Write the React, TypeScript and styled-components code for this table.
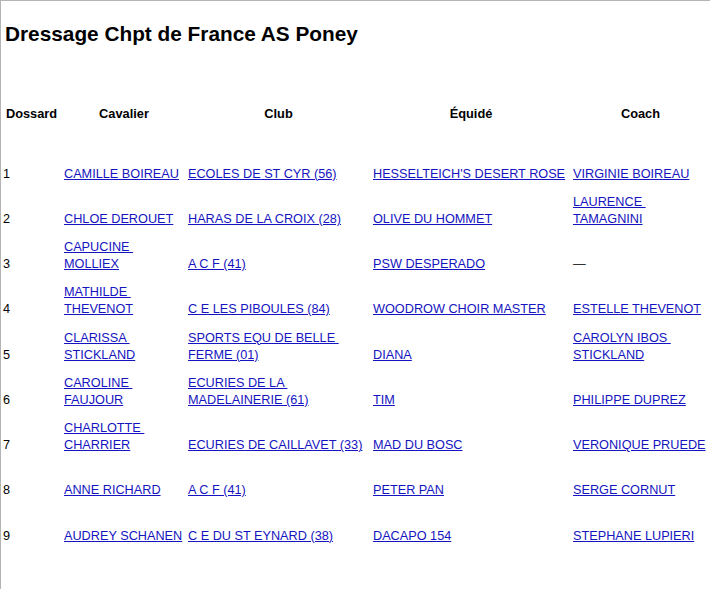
import React from 'react'
import styled, { createGlobalStyle } from 'styled-components'

const GlobalStyle = createGlobalStyle`
  html, body {
    margin: 0;
    padding: 0;
    background: #ffffff;
  }
  body {
    font-family: 'Liberation Sans', Arial, sans-serif;
    color: #000000;
  }
`

const Page = styled.div`
  box-sizing: border-box;
  min-height: 100vh;
  border-top: 1px solid #b4b4b4;
  border-left: 1px solid #b4b4b4;
`

const Title = styled.h1`
  margin: 0;
  padding: 21px 0 0 4px;
  font-size: 20.8px;
  line-height: 24px;
  font-weight: bold;
`

const Results = styled.table`
  margin-top: 46px;
  width: 709px;
  table-layout: fixed;
  border-collapse: collapse;
  border-spacing: 0;
`

const HeadRow = styled.tr`
  height: 45.25px;
`

const HeadCell = styled.th`
  padding: 0 2px 2px;
  font-size: 12.8px;
  font-weight: bold;
  text-align: center;
  vertical-align: middle;
`

const Row = styled.tr`
  height: 45.25px;
`

const Cell = styled.td`
  padding: 0 2px;
  font-size: 12.7px;
  line-height: 17px;
  vertical-align: bottom;
  white-space: pre;
`

const Entry = styled.a`
  color: #1414c0;
  text-decoration: underline;
  cursor: pointer;
`

const Empty = styled.span`
  color: #333333;
`

type Line = string[]

interface Rider {
  dossard: number
  cavalier: Line
  club: Line
  equide: Line
  coach: Line | null
}

const columns = [
  { label: 'Dossard', width: 61 },
  { label: 'Cavalier', width: 124 },
  { label: 'Club', width: 185 },
  { label: 'Équidé', width: 200 },
  { label: 'Coach', width: 139 },
]

const riders: Rider[] = [
  {
    dossard: 1,
    cavalier: ['CAMILLE BOIREAU'],
    club: ['ECOLES DE ST CYR (56)'],
    equide: ["HESSELTEICH'S DESERT ROSE"],
    coach: ['VIRGINIE BOIREAU'],
  },
  {
    dossard: 2,
    cavalier: ['CHLOE DEROUET'],
    club: ['HARAS DE LA CROIX (28)'],
    equide: ['OLIVE DU HOMMET'],
    coach: ['LAURENCE ', 'TAMAGNINI'],
  },
  {
    dossard: 3,
    cavalier: ['CAPUCINE ', 'MOLLIEX'],
    club: ['A C F (41)'],
    equide: ['PSW DESPERADO'],
    coach: null,
  },
  {
    dossard: 4,
    cavalier: ['MATHILDE ', 'THEVENOT'],
    club: ['C E LES PIBOULES (84)'],
    equide: ['WOODROW CHOIR MASTER'],
    coach: ['ESTELLE THEVENOT'],
  },
  {
    dossard: 5,
    cavalier: ['CLARISSA ', 'STICKLAND'],
    club: ['SPORTS EQU DE BELLE ', 'FERME (01)'],
    equide: ['DIANA'],
    coach: ['CAROLYN IBOS ', 'STICKLAND'],
  },
  {
    dossard: 6,
    cavalier: ['CAROLINE ', 'FAUJOUR'],
    club: ['ECURIES DE LA ', 'MADELAINERIE (61)'],
    equide: ['TIM'],
    coach: ['PHILIPPE DUPREZ'],
  },
  {
    dossard: 7,
    cavalier: ['CHARLOTTE ', 'CHARRIER'],
    club: ['ECURIES DE CAILLAVET (33)'],
    equide: ['MAD DU BOSC'],
    coach: ['VERONIQUE PRUEDE'],
  },
  {
    dossard: 8,
    cavalier: ['ANNE RICHARD'],
    club: ['A C F (41)'],
    equide: ['PETER PAN'],
    coach: ['SERGE CORNUT'],
  },
  {
    dossard: 9,
    cavalier: ['AUDREY SCHANEN'],
    club: ['C E DU ST EYNARD (38)'],
    equide: ['DACAPO 154'],
    coach: ['STEPHANE LUPIERI'],
  },
]

const LinkLines = ({ lines }: { lines: Line }) => (
  <>
    {lines.map((line, i) => (
      <React.Fragment key={i}>
        {i > 0 && <br />}
        <Entry>{line}</Entry>
      </React.Fragment>
    ))}
  </>
)

export default function App() {
  return (
    <Page>
      <GlobalStyle />
      <Title>Dressage Chpt de France AS Poney</Title>

      <Results>
        <colgroup>
          {columns.map((c) => (
            <col key={c.label} style={{ width: c.width }} />
          ))}
        </colgroup>
        <thead>
          <HeadRow>
            {columns.map((c) => (
              <HeadCell key={c.label}>{c.label}</HeadCell>
            ))}
          </HeadRow>
        </thead>
        <tbody>
          {riders.map((r) => (
            <Row key={r.dossard}>
              <Cell>{r.dossard}</Cell>
              <Cell>
                <LinkLines lines={r.cavalier} />
              </Cell>
              <Cell>
                <LinkLines lines={r.club} />
              </Cell>
              <Cell>
                <LinkLines lines={r.equide} />
              </Cell>
              <Cell>
                {r.coach ? <LinkLines lines={r.coach} /> : <Empty>—</Empty>}
              </Cell>
            </Row>
          ))}
        </tbody>
      </Results>
    </Page>
  )
}
